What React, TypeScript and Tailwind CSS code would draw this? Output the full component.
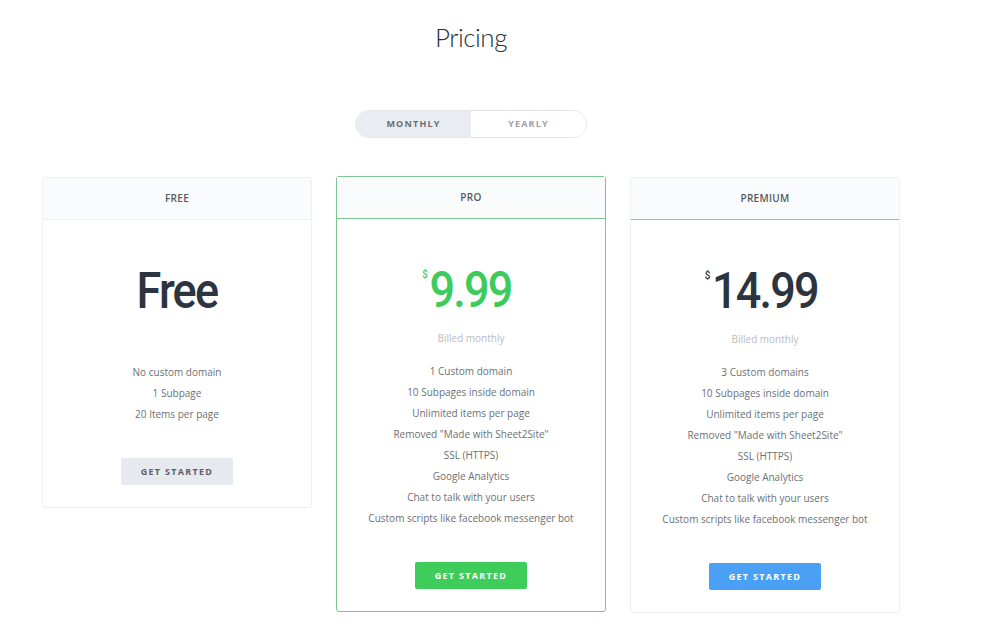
import React from "react";

type Plan = {
  name: string;
  price: string;
  dollar: boolean;
  billed: boolean;
  features: string[];
  priceColor: string;
  cardBorder: string;
  headerBorder: string;
  btn: string;
  extra: string;
};

const plans: Plan[] = [
  {
    name: "FREE",
    price: "Free",
    dollar: false,
    billed: false,
    features: ["No custom domain", "1 Subpage", "20 Items per page"],
    priceColor: "text-[#2c3440]",
    cardBorder: "border-[#eef0f2]",
    headerBorder: "border-[#eef0f2]",
    btn: "bg-[#e6e9ee] text-[#5b6068]",
    extra: "mt-px",
  },
  {
    name: "PRO",
    price: "9.99",
    dollar: true,
    billed: true,
    features: [
      "1 Custom domain",
      "10 Subpages inside domain",
      "Unlimited items per page",
      'Removed "Made with Sheet2Site"',
      "SSL (HTTPS)",
      "Google Analytics",
      "Chat to talk with your users",
      "Custom scripts like facebook messenger bot",
    ],
    priceColor: "text-[#3dcb5b]",
    cardBorder: "border-[#7cc591]",
    headerBorder: "border-[#7cc591]",
    btn: "bg-[#3ecc5b] text-white",
    extra: "",
  },
  {
    name: "PREMIUM",
    price: "14.99",
    dollar: true,
    billed: true,
    features: [
      "3 Custom domains",
      "10 Subpages inside domain",
      "Unlimited items per page",
      'Removed "Made with Sheet2Site"',
      "SSL (HTTPS)",
      "Google Analytics",
      "Chat to talk with your users",
      "Custom scripts like facebook messenger bot",
    ],
    priceColor: "text-[#2c3440]",
    cardBorder: "border-[#eef0f2]",
    headerBorder: "border-[#9fb5b9]",
    btn: "bg-[#4aa0f5] text-white",
    extra: "mt-px",
  },
];

function Card({ p }: { p: Plan }) {
  return (
    <div
      className={`w-[270px] border ${p.cardBorder} rounded-[3px] bg-white flex flex-col items-center ${p.extra}`}
    >
      <div
        className={`w-full h-[42px] bg-[#f9fbfc] border-b ${p.headerBorder} flex items-center justify-center text-[10px] font-semibold text-[#555a60] tracking-[0.3px]`}
      >
        {p.name}
      </div>
      <div className="pt-[45px] flex flex-col items-center w-full">
        <div
          className={`h-[52px] flex items-center text-[50px] leading-none font-medium ${p.priceColor}`}
          style={{ fontFamily: "Roboto, sans-serif" }}
        >
          <span className="relative inline-block tracking-[-2px] scale-x-[0.9]">
            {p.dollar && (
              <span className="absolute left-[-8px] top-[4px] text-[11px] leading-none font-medium tracking-normal">
                $
              </span>
            )}
            {p.price}
          </span>
        </div>
        <div className="mt-[14px] h-[16px] leading-[16px] text-[10px] text-[#b9bcc0]">
          {p.billed ? "Billed monthly" : ""}
        </div>
        <div className="mt-[15px] flex flex-col items-center">
          {p.features.map((f) => (
            <div key={f} className="h-[21px] leading-[21px] text-[10px] text-[#6b7075]">
              {f}
            </div>
          ))}
        </div>
        <button
          className={`mt-[33px] mb-[22px] w-[112px] h-[27px] rounded-[2px] text-[9px] font-bold tracking-[1.3px] ${p.btn}`}
        >
          GET STARTED
        </button>
      </div>
    </div>
  );
}

export default function App() {
  return (
    <div
      className="w-[1000px] h-[642px] bg-white overflow-hidden"
      style={{ fontFamily: '"Open Sans", sans-serif' }}
    >
      <div className="w-[942px] flex flex-col items-center">
        <h1
          className="mt-[18px] h-[38px] leading-[38px] text-[26px] font-light text-[#2a2f36] tracking-[-0.5px]"
          style={{ fontFamily: "Lato, sans-serif" }}
        >
          Pricing
        </h1>
        <div className="mt-[54px] w-[232px] h-[28px] rounded-full border border-[#e3e6ea] flex overflow-hidden">
          <div className="flex-1 bg-[#e9ecf0] flex items-center justify-center text-[9px] font-bold tracking-[1.2px] text-[#6a6f76]">
            MONTHLY
          </div>
          <div className="flex-1 bg-white flex items-center justify-center text-[9px] font-bold tracking-[1.2px] text-[#9a9fa5]">
            YEARLY
          </div>
        </div>
        <div className="mt-[38px] flex items-start gap-[24px]">
          {plans.map((p) => (
            <Card key={p.name} p={p} />
          ))}
        </div>
      </div>
    </div>
  );
}
